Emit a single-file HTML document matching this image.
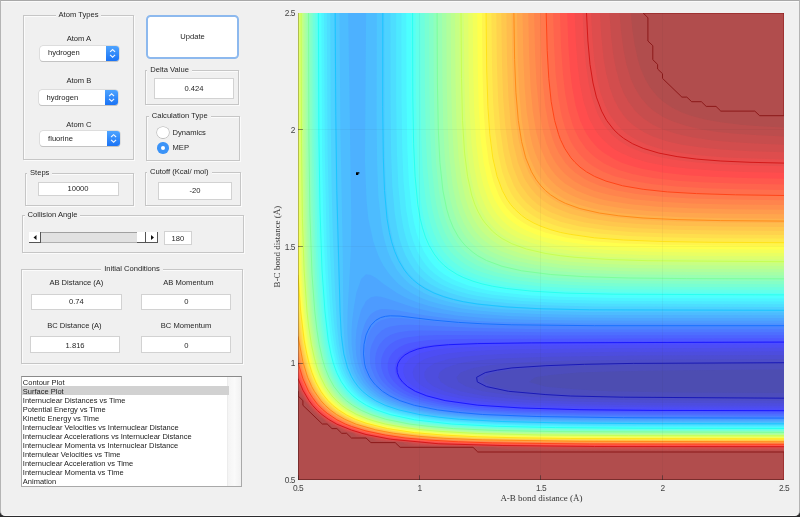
<!DOCTYPE html><html><head><meta charset="utf-8"><style>
html,body{margin:0;padding:0;width:800px;height:517px;overflow:hidden;background:#2b2b2d}
body{position:relative;font-family:"Liberation Sans",sans-serif;}
#win{position:absolute;left:0;top:0;width:798px;height:515px;background:#f0f0f0;border:1px solid #b4b4b4;border-top-color:#a8a8a8;border-bottom:none;border-radius:0 0 5px 5px;overflow:hidden;box-shadow:inset 0 1px 0 #fafafa, inset 0 -1px 0 #f8f8f8}
.pn{position:absolute;box-sizing:border-box;border:1px solid #c6c6c6;box-shadow:1px 1px 0 #fbfbfb, inset 1px 1px 0 #fbfbfb}
.pt{position:absolute;height:12px;font-size:7.6px;line-height:12px;color:#262626;white-space:nowrap}
.pt span{background:#f0f0f0;padding:0 3px}
.lb{position:absolute;height:10px;font-size:7.6px;line-height:10px;color:#262626;text-align:center;white-space:nowrap}
.ed{position:absolute;box-sizing:border-box;background:#fff;border:1px solid #d2d2d2;font-size:7.6px;color:#262626;text-align:center;white-space:nowrap}
.pp{position:absolute;box-sizing:border-box;background:#fff;border-radius:3px;box-shadow:0 0 0 0.5px #c9c9c9, 0 1px 0.5px #bdbdbd;font-size:7.6px;color:#222;white-space:nowrap;overflow:hidden}
.pb{position:absolute;right:0;top:0;background:linear-gradient(#4ea4ff,#1a73f5)}
.tk{position:absolute;font-size:8.4px;color:#444;letter-spacing:-0.5px;white-space:nowrap;line-height:10px}
.li{position:absolute;left:0px;height:9px;line-height:9px;font-size:7.5px;color:#222;padding-left:0.5px;white-space:nowrap}
</style></head><body><div id="win">
</div>
<div id="ui" style="position:absolute;left:0;top:0;width:800px;height:517px;will-change:transform">
<div class="pn" style="left:23px;top:15px;width:111px;height:145px"></div>
<div class="pt" style="left:23px;width:111px;top:9.4px;text-align:center"><span>Atom Types</span></div>
<div class="lb" style="left:18.900000000000006px;top:33.8px;width:120px">Atom A</div>
<div class="pp" style="left:40px;top:46.2px;width:79px;height:14.799999999999997px"><span style="position:absolute;left:8px;top:0;line-height:14.799999999999997px">hydrogen</span><div class="pb" style="width:13px;height:14.799999999999997px"><svg width="13" height="14.799999999999997" style="position:absolute;left:0;top:0"><path d="M4.1 5.899999999999999 L6.6 3.5999999999999988 L9.1 5.899999999999999 M4.1 8.799999999999999 L6.6 11.099999999999998 L9.1 8.799999999999999" stroke="#fff" stroke-opacity="0.92" stroke-width="1.15" fill="none"/></svg></div></div>
<div class="lb" style="left:18.900000000000006px;top:75.9px;width:120px">Atom B</div>
<div class="pp" style="left:38.6px;top:89.5px;width:79.30000000000001px;height:15.099999999999994px"><span style="position:absolute;left:8px;top:0;line-height:15.099999999999994px">hydrogen</span><div class="pb" style="width:13px;height:15.099999999999994px"><svg width="13" height="15.099999999999994" style="position:absolute;left:0;top:0"><path d="M4.1 6.049999999999997 L6.6 3.7499999999999973 L9.1 6.049999999999997 M4.1 8.949999999999998 L6.6 11.249999999999996 L9.1 8.949999999999998" stroke="#fff" stroke-opacity="0.92" stroke-width="1.15" fill="none"/></svg></div></div>
<div class="lb" style="left:18.900000000000006px;top:120.4px;width:120px">Atom C</div>
<div class="pp" style="left:40.1px;top:131.3px;width:79.6px;height:15.0px"><span style="position:absolute;left:8px;top:0;line-height:15.0px">fluorine</span><div class="pb" style="width:13px;height:15.0px"><svg width="13" height="15.0" style="position:absolute;left:0;top:0"><path d="M4.1 6.0 L6.6 3.7 L9.1 6.0 M4.1 8.9 L6.6 11.2 L9.1 8.9" stroke="#fff" stroke-opacity="0.92" stroke-width="1.15" fill="none"/></svg></div></div>
<div style="position:absolute;left:146px;top:15px;width:93px;height:43.5px;box-sizing:border-box;border:2.2px solid #8db9ee;border-radius:4.5px;background:#fff;font-size:7.6px;color:#262626;text-align:center;line-height:39.5px">Update</div>
<div class="pn" style="left:145px;top:69.5px;width:94px;height:35.5px"></div>
<div class="pt" style="left:147.2px;top:63.9px"><span>Delta Value</span></div>
<div class="ed" style="left:154.3px;top:77.7px;width:79.29999999999998px;height:21.0px;line-height:19.0px;padding-top:0.4px">0.424</div>
<div class="pn" style="left:146px;top:115.5px;width:94px;height:45.0px"></div>
<div class="pt" style="left:148.7px;top:109.9px"><span>Calculation Type</span></div>
<div style="position:absolute;left:157.2px;top:126.6px;width:11.4px;height:11.4px;box-sizing:border-box;border-radius:50%;background:#fff;box-shadow:0 0 0 0.6px #b5b5b5, 0 0.6px 0.6px #aaa"></div>
<div class="lb" style="left:172.5px;top:128.1px;text-align:left">Dynamics</div>
<div style="position:absolute;left:157.3px;top:142.3px;width:11.4px;height:11.4px;box-sizing:border-box;border-radius:50%;background:#3b93f7"><div style="position:absolute;left:3.7px;top:3.7px;width:4px;height:4px;border-radius:50%;background:#fff"></div></div>
<div class="lb" style="left:172.5px;top:143.4px;text-align:left">MEP</div>
<div class="pn" style="left:24.5px;top:173px;width:109.5px;height:32.5px"></div>
<div class="pt" style="left:27px;top:167.4px"><span>Steps</span></div>
<div class="ed" style="left:37.5px;top:181.7px;width:81.0px;height:14.700000000000017px;line-height:12.700000000000017px;padding-top:0.4px">10000</div>
<div class="pn" style="left:145px;top:172px;width:96px;height:34.19999999999999px"></div>
<div class="pt" style="left:147px;top:166.4px"><span>Cutoff (Kcal/ mol)</span></div>
<div class="ed" style="left:158.2px;top:181.7px;width:73.5px;height:18.80000000000001px;line-height:16.80000000000001px;padding-top:0.4px">-20</div>
<div class="pn" style="left:22px;top:215px;width:222px;height:37.5px"></div>
<div class="pt" style="left:24.6px;top:209.4px"><span>Collision Angle</span></div>
<div style="position:absolute;left:29px;top:231.5px;width:128.6px;height:11.2px;box-sizing:border-box;background:#e1e1e1;border-top:1.5px solid #a0a0a0;border-bottom:1px solid #b0b0b0"></div>
<div style="position:absolute;left:29px;top:231.5px;width:11.8px;height:11.2px;box-sizing:border-box;background:#fff;border-right:1.5px solid #555;border-bottom:1.5px solid #555"><svg width="10" height="10" style="position:absolute;left:2px;top:1px"><path d="M2.5 4.5 L5.5 2 L5.5 7 Z" fill="#111"/></svg></div>
<div style="position:absolute;left:137.1px;top:231.5px;width:8.8px;height:11.2px;box-sizing:border-box;background:#fff;border-right:1.2px solid #555;border-bottom:1.5px solid #555"></div>
<div style="position:absolute;left:145.9px;top:231.5px;width:11.7px;height:11.2px;box-sizing:border-box;background:#fff;border-right:1.5px solid #555;border-bottom:1.5px solid #555"><svg width="10" height="10" style="position:absolute;left:2px;top:1px"><path d="M3 2 L6 4.5 L3 7 Z" fill="#111"/></svg></div>
<div class="ed" style="left:164.3px;top:231.4px;width:27.299999999999983px;height:14.099999999999994px;line-height:12.099999999999994px;padding-top:0.4px">180</div>
<div class="pn" style="left:21px;top:268.5px;width:222px;height:95.5px"></div>
<div class="pt" style="left:21px;width:222px;top:262.9px;text-align:center"><span>Initial Conditions</span></div>
<div class="lb" style="left:16.400000000000006px;top:277.8px;width:120px">AB Distance (A)</div>
<div class="ed" style="left:31.2px;top:293.6px;width:90.39999999999999px;height:16.799999999999955px;line-height:14.799999999999955px;padding-top:0.4px">0.74</div>
<div class="lb" style="left:14.400000000000006px;top:321px;width:120px">BC Distance (A)</div>
<div class="ed" style="left:30.2px;top:336.2px;width:89.8px;height:17.30000000000001px;line-height:15.300000000000011px;padding-top:0.4px">1.816</div>
<div class="lb" style="left:128.4px;top:277.8px;width:120px">AB Momentum</div>
<div class="ed" style="left:141.2px;top:293.6px;width:90.30000000000001px;height:16.799999999999955px;line-height:14.799999999999955px;padding-top:0.4px">0</div>
<div class="lb" style="left:126.1px;top:321px;width:120px">BC Momentum</div>
<div class="ed" style="left:141.2px;top:336.2px;width:90.30000000000001px;height:17.30000000000001px;line-height:15.300000000000011px;padding-top:0.4px">0</div>
<div style="position:absolute;left:21.3px;top:376.2px;width:220.4px;height:110.8px;box-sizing:border-box;background:#fff;border:1px solid #a9a9a9;border-top-color:#8a8a8a">
<div style="position:absolute;right:0;top:0;width:12.5px;height:108.8px;background:linear-gradient(90deg,#f4f4f4,#fafafa 50%,#f1f1f1);border-left:1px solid #ececec"></div>
<div style="position:absolute;left:0;top:8.9px;width:207px;height:9px;background:#d1d1d1"></div>
<div class="li" style="top:0.7px">Contour Plot</div>
<div class="li" style="top:9.7px">Surface Plot</div>
<div class="li" style="top:18.7px">Internuclear Distances vs Time</div>
<div class="li" style="top:27.7px">Potential Energy vs Time</div>
<div class="li" style="top:36.7px">Kinetic Energy vs Time</div>
<div class="li" style="top:45.7px">Internuclear Velocities vs Internuclear Distance</div>
<div class="li" style="top:54.7px">Internuclear Accelerations vs Internuclear Distance</div>
<div class="li" style="top:63.7px">Internuclear Momenta vs Internuclear Distance</div>
<div class="li" style="top:72.7px">Internulear Velocities vs Time</div>
<div class="li" style="top:81.7px">Internuclear Acceleration vs Time</div>
<div class="li" style="top:90.7px">Internuclear Momenta vs Time</div>
<div class="li" style="top:99.7px">Animation</div>
</div>
<svg width="800" height="517" style="position:absolute;left:0;top:0">
<defs><clipPath id="pc"><rect x="298" y="13" width="486" height="467"/></clipPath></defs>
<g clip-path="url(#pc)">
<rect x="298" y="13" width="486" height="467" fill="#b14d4d"/>
<path fill="#bc4d4d" fill-rule="evenodd" d="M493 447.3 502.1 448.7 511.8 449.4 545.9 450.3 784 450.9 784 127.5 759.7 126.2 740.3 124.7 720.8 122.3 706.2 119.7 691.7 115.9 681.9 112.4 672.2 107.7 663.3 101.7 657.6 96.7 650.2 87.7 644.8 78.4 640.8 69 637.9 59.7 634.8 45.7 632.6 31.7 630.7 13 298 13 298 388.5 300.4 395.9 302.9 398.3 304 400.6 307.7 404.6 311.2 409.9 316 414.6 317.4 416 322.9 419.3 327.2 422.9 329.2 424 332 426.6 339 428.6 341.7 431.3 352.6 433.3 356.3 436.4 371.3 438 375.8 440.9 380.6 441.6 402.9 442.6 404.9 444.1 409.8 445.5 414.6 446 429.2 446.5 492.4 447.3Z"/>
<path fill="#c74d4d" fill-rule="evenodd" d="M516.1 447.3 541 448.6 584.7 449.3 784 449.8 784 136.4 754.8 135.1 735.4 133.8 716 131.7 701.4 129.4 686.8 126.1 672.2 121.3 662.5 116.7 653.8 111.1 647.9 106 640.3 97.1 634.7 87.7 630.6 78.4 626.4 64.4 623.6 50.4 621.1 31.7 619.6 13 298 13 298 386 300 391.3 305.2 400.6 312.6 409.3 318.1 414.6 327.2 421.9 346.6 431.5 351.5 432.3 354.5 433.3 356.3 434.8 361.2 436.2 373.9 438 375.8 439.2 380.6 440.5 407.4 442.6 414.6 444.6 419.5 445.2 438.9 446 511.8 447.2Z"/>
<path fill="#d24d4d" fill-rule="evenodd" d="M553.6 447.3 628.5 448.4 784 448.7 784 144.7 754.8 143.6 730.5 142.1 711.1 140.2 691.7 137.3 677.1 134.1 663.7 129.8 652.8 124.7 643.1 118.3 635.3 111.1 628.5 102 623.3 92.4 619.7 83 615.9 69 613.3 55 611.1 36.3 609.4 13 298 13 298 384 301 391.3 306.3 400.6 312.6 408.2 319.2 414.6 327.2 420.9 336.9 426.2 346.6 430.6 351.5 431.7 361.2 435.3 376.6 438 380.6 439.5 385.5 440.3 412.2 442.6 419.5 444.1 434.1 445.2 550.7 447.3Z"/>
<path fill="#de4d4d" fill-rule="evenodd" d="M655.9 447.3 784 447.6 784 152.3 750 151.3 720.8 149.5 701.4 147.6 681.9 144.7 667.4 141.4 652.8 136.5 643.1 131.8 633.3 125.3 628 120.4 623.8 115.7 618.8 108.5 613.9 99.2 609.7 87.7 606.2 73.7 603.7 59.7 601.3 36.3 599.9 13 298 13 298 382 301.9 391.3 307.5 400.6 311.1 405.3 317.4 412.1 327.2 419.9 336.9 425.4 346.6 429.8 361.2 434.4 385.5 439.5 429.2 444.2 448.7 445.1 536.1 446.7 652.8 447.3Z"/>
<path fill="#e94d4d" fill-rule="evenodd" d="M423.3 442.6 434.1 443.8 448.7 444.5 531.3 446.2 618.8 446.8 784 447 784 159.5 725.7 157.5 701.4 155.6 681.4 153.1 662.5 149.4 647.9 145 638.2 140.8 627.5 134.4 621.8 129.8 617.2 125.1 610.3 115.7 605.4 106.4 600.4 92.4 597.1 78.4 594.2 59.7 592.2 36.3 591 13 298 13 298 379.7 302.9 391.3 307.7 399.4 312.6 405.9 316.3 409.9 322.3 415.3 327.7 419.3 336.9 424.6 346.6 428.9 366 434.8 390.3 439.5 419.5 442.3Z"/>
<path fill="#f44d4d" fill-rule="evenodd" d="M429.7 442.6 458.4 444.3 536.1 445.8 784 446.5 784 166.3 745.1 165.3 716 164 691.7 162 672.2 159.5 657.6 156.8 643.1 152.8 628.5 146.6 618.8 140.6 611.6 134.4 603.8 125.1 599.3 117.4 596.4 111.1 591.7 97.1 588.6 83 585.9 64.4 583.9 41 582.6 13 298 13 298 377.4 303.8 391.3 307.7 398 313 405.3 317.3 409.9 322.5 414.6 329 419.3 337.1 424 347.9 428.6 366 434.2 390.3 438.9 429.2 442.6Z"/>
<path fill="#ff4d4d" fill-rule="evenodd" d="M437 442.6 463.2 444 541 445.4 784 446.1 784 172.7 745.1 171.9 716 170.7 686.8 168.6 667.4 166.3 647.9 162.6 633.3 158.3 621.1 153.1 613.9 148.9 609 145.3 602.3 139.1 598.3 134.4 594.5 128.8 590 120.4 588 115.7 583.5 101.7 579.9 83.8 577.5 64.4 575.8 41 574.7 13 298 13 298 374.9 302.5 386.6 304.8 391.3 307.7 396.6 314.1 405.3 318.4 409.9 323.7 414.6 330.3 419.3 338.7 424 349.7 428.6 356.3 430.8 366 433.6 375.8 435.6 395.2 438.9 434.1 442.5Z"/>
<path fill="#ff584d" fill-rule="evenodd" d="M445.3 442.6 492.4 444.2 550.7 445.1 784 445.7 784 178.7 745.1 178 711.1 176.8 686.8 175.2 662.5 172.6 643.1 169.1 628.5 165.1 621.1 162.4 613.9 159.1 604 153.1 598.3 148.4 594.5 144.6 590 139.1 586.9 134.4 584.3 129.8 580.1 120.4 575.8 106.4 572.2 87.7 570 69 568.4 45.7 567.2 13 298 13 298 372.2 299.7 377.3 303.4 386.6 307.7 395 315.1 405.3 319.6 409.9 327.2 416.2 332 419.5 341.7 424.7 351.5 428.6 361.2 431.6 370.9 434.1 385.5 436.8 409.8 440 443.8 442.6Z"/>
<path fill="#ff634d" fill-rule="evenodd" d="M454.9 442.6 502.1 444 560.4 444.7 784 445.2 784 184.5 735.4 183.6 701.4 182.3 677.1 180.7 652.8 177.9 633.3 174.2 618.8 169.9 611.6 167.1 604.2 163.4 595.6 157.8 590.2 153.1 585.8 148.4 579.2 139.1 575 130.8 572.7 125.1 568.5 111.1 565.3 94.4 562.9 73.7 561 45.7 560 13 298 13 298 369.3 300.6 377.3 304.3 386.6 307.7 393.3 312.4 400.6 316.2 405.3 320.7 409.9 327.2 415.3 333 419.3 341.7 424 353.4 428.6 361.2 431 370.9 433.5 385.5 436.3 396.4 438 414.6 439.9 453.5 442.6Z"/>
<path fill="#ff6e4d" fill-rule="evenodd" d="M466.4 442.6 511.8 443.7 570.2 444.4 784 444.8 784 190 740.3 189.3 706.2 188.3 677.1 186.6 652.8 184.2 633.3 181.1 615.2 176.4 603.2 171.8 594.5 167.1 589.6 163.8 584.7 159.8 579.9 154.8 575 148.6 572 143.8 569.6 139.1 565.7 129.8 561.6 115.7 558.2 97.1 555.6 73.7 554.1 45.7 553.1 13 298 13 298 366.2 302.9 381.2 307.5 391.3 310.3 395.9 317.2 405.3 321.8 409.9 327.4 414.6 334.4 419.3 343.4 424 351.5 427.2 361.2 430.4 372.5 433.3 400.1 437.9 429.2 440.6 463.2 442.5Z"/>
<path fill="#ff794d" fill-rule="evenodd" d="M480.8 442.6 579.9 444 784 444.3 784 195.2 735.4 194.6 696.5 193.3 667.4 191.6 643.1 189 623.6 185.7 607.1 181.1 594.5 175.9 587.1 171.8 580.7 167.1 575.6 162.4 571.5 157.8 565.2 148.4 559 134.4 555 120.4 551.6 101.7 549.1 78.4 547.5 50.4 546.6 13 298 13 298 362.9 300.8 372.6 304.1 381.9 308.5 391.3 312.6 397.9 317.4 404.2 323 409.9 328.7 414.6 336.9 419.9 345.1 424 356.3 428.3 375.8 433.4 404.8 438 438.9 440.8 477.8 442.5Z"/>
<path fill="#ff844d" fill-rule="evenodd" d="M499.6 442.6 594.5 443.6 784 443.9 784 200.3 730.5 199.6 691.7 198.4 662.5 196.7 638.2 194.2 616.5 190.5 599.8 185.8 589.6 181.6 584.7 179.1 575 172.6 570.2 168.3 565.3 162.9 558.8 153.1 555.6 146.6 552.6 139.1 548.6 125.1 545.3 106.4 542.9 83 541.1 50.4 540.2 13 298 13 298 359.2 302.9 376.3 307.1 386.6 312.3 395.9 315.6 400.6 319.5 405.3 327.2 412.4 336.9 419 341.7 421.6 346.8 424 359.5 428.6 380.6 433.8 409.8 438 448.7 440.8 497.3 442.6Z"/>
<path fill="#ff8f4d" fill-rule="evenodd" d="M527 442.6 618.8 443.3 784 443.5 784 205.1 730.5 204.5 691.7 203.5 657.6 201.6 633.3 199.2 609.7 195.1 594.5 190.9 582.2 185.8 575 181.7 570.2 178.3 565.3 174.2 560.4 169.1 555.6 162.7 552.7 157.8 550.3 153.1 546.5 143.8 542.6 129.8 539.2 111.1 536.5 83 535.1 55 534.1 13 298 13 298 355.1 302.9 373.6 306 381.9 310.5 391.3 316.7 400.6 320.7 405.3 325.5 409.9 332 415 338.9 419.3 348.6 424 361.2 428.5 370.9 431 381.1 433.3 395.2 435.6 424.4 438.8 468.1 441.2 526.4 442.6Z"/>
<path fill="#ff9b4d" fill-rule="evenodd" d="M577.2 442.6 784 443 784 209.8 730.5 209.3 691.7 208.3 657.6 206.7 632.6 204.5 609 200.9 599.3 198.7 589.6 195.8 576.4 190.5 565.3 183.7 560.4 179.8 555.6 174.9 550.7 168.7 546.8 162.4 540.7 148.4 536.1 131.8 532.8 111.1 530.6 87.7 529.1 55 528.3 13 298 13 298 350.6 302.1 367.9 307 381.9 311.5 391.3 317.8 400.6 321.8 405.3 326.7 409.9 336.9 417.2 350.4 424 361.2 427.7 370.9 430.4 385.5 433.5 409.8 436.9 429.2 438.6 458.4 440.3 487.5 441.3 575 442.6Z"/>
<path fill="#ffa64d" fill-rule="evenodd" d="M426.9 438 473 440.4 536.1 441.7 623.6 442.4 784 442.6 784 214.3 725.7 213.8 681.9 212.7 647.9 210.9 623.6 208.6 599.3 204.5 582.4 199.8 570.2 194.7 562.8 190.5 556.5 185.8 551.5 181.1 547.4 176.4 541 166.7 535.1 153.1 532.2 143.8 530.1 134.4 526.6 111.1 524.7 87.7 523.3 55 522.5 13 298 13 298 345.6 303 367.9 307.9 381.9 312.5 391.3 317.4 398.6 323.1 405.3 328.1 409.9 334.3 414.6 341.7 419.1 356.3 425.4 366.4 428.6 375.8 430.9 395.2 434.4 424.4 437.8Z"/>
<path fill="#ffb14d" fill-rule="evenodd" d="M434 438 477.8 440 541 441.3 784 442 784 218.7 725.7 218.2 681.9 217.2 647.9 215.6 618.8 213 595 209.1 577.8 204.5 565.3 199.4 557.8 195.1 551.4 190.5 546.3 185.8 542.2 181.1 535.9 171.8 529.7 157.8 526.8 148.4 524.7 139.1 521.6 119.5 519.2 92.4 517.8 59.7 517 13 298 13 298 340 300.6 353.9 304 367.9 309 381.9 312.6 389.3 317.4 397.1 324.3 405.3 329.4 409.9 335.7 414.6 341.7 418.2 356.3 424.7 369 428.6 375.8 430.2 395.2 433.9 429.2 437.6Z"/>
<path fill="#ffbc4d" fill-rule="evenodd" d="M442.2 438 487.5 439.8 545.9 440.8 784 441.5 784 222.9 720.8 222.4 677.1 221.4 643.1 219.9 613.9 217.3 591.9 213.8 573.7 209.1 560.4 203.8 553.2 199.8 546.5 195.1 541.3 190.5 536.1 184.5 531.3 177.3 528.3 171.8 522.9 157.8 518.5 139.1 515.8 120.4 513.6 92.4 512.3 59.7 511.6 13 298 13 298 333.6 302.5 358.6 306.5 372.6 312.6 387.4 317.4 395.5 321.3 400.6 325.6 405.3 330.8 409.9 337.2 414.6 345.5 419.3 356.3 424 366 427.1 385.5 431.6 409.8 435.1 438.9 437.8Z"/>
<path fill="#ffc74d" fill-rule="evenodd" d="M451.6 438 497.3 439.5 555.6 440.4 784 441 784 227 720.8 226.5 677.1 225.7 643.1 224.3 613.9 221.9 589.6 218.5 570.2 213.8 555.6 208.1 548.9 204.5 542 199.8 536.7 195.1 531.3 189.1 526.4 182 523.4 176.5 517.9 162.4 513.4 143.8 510.7 125.1 508.4 97.1 507 59.7 506.4 13 298 13 298 326.2 302.5 353.9 307.7 373.4 313.3 386.6 317.4 393.7 322.5 400.6 326.9 405.3 332.2 409.9 338.9 414.6 347.3 419.3 358.5 424 366 426.3 375.8 429 390.3 431.8 414.6 435.1 448.7 437.8Z"/>
<path fill="#ffd24d" fill-rule="evenodd" d="M462.8 438 507 439.3 565.3 440 784 440.5 784 231 720.8 230.6 672.2 229.7 638.2 228.3 609 226 584.7 222.5 565.3 217.8 550.7 212.2 544.9 209.1 537.8 204.5 532.3 199.8 527.9 195.1 521.6 186.4 518.6 181.1 513 167.1 508.4 148.4 505.2 125.1 503.1 97.1 502 64.4 501.3 13 298 13 298 317.5 300.2 335.2 302.9 351.1 307 367.9 310.2 377.3 312.6 382.9 317.4 391.9 322.3 398.7 327.2 404.2 333.7 409.9 340.5 414.6 351.5 420.3 360.7 424 370.9 427 380.6 429.3 395.2 432 424.4 435.5 458.4 437.8Z"/>
<path fill="#ffde4d" fill-rule="evenodd" d="M476.6 438 521.6 439 575 439.6 784 440 784 234.9 716 234.4 667.4 233.5 633.3 232.2 604.2 229.8 579.9 226.4 560.4 221.7 545.9 216.1 536.1 210.7 531.3 207.1 526.4 202.8 521.6 197.4 516.7 190.6 514 185.8 508.2 171.8 505.6 162.4 503.6 153.1 500.3 129.8 498.2 101.7 496.9 64.4 496.3 13 298 13 298 307 300.6 330.6 303.5 349.2 307.7 366.8 312.6 380.4 317.4 390 321.4 395.9 329.7 405.3 335.2 409.9 342.1 414.6 351 419.3 361.2 423.3 380.6 428.7 408.6 433.3 438.9 436 473 437.8Z"/>
<path fill="#ffe94d" fill-rule="evenodd" d="M494.7 438 589.6 439.1 784 439.5 784 238.6 711.1 238.2 662.5 237.3 628.5 235.9 599.3 233.6 575 230.2 565.3 228.2 555.6 225.5 545.9 222.1 538 218.5 531.3 214.5 526.4 211 521.6 206.6 515.5 199.8 511.8 194.4 507.3 185.8 502.2 171.8 498 153.1 495 129.8 493.1 101.7 492 64.4 491.4 13 298 13 298 294 300 316.5 302.9 339.9 306.6 358.6 310.7 372.6 312.6 377.7 316.7 386.6 322.3 395.5 327.2 401.4 336.7 409.9 346.6 416.1 353.1 419.3 361.2 422.4 375.8 426.8 390.3 429.9 409.8 432.8 429.2 434.7 458.4 436.6 492.4 437.9Z"/>
<path fill="#fff44d" fill-rule="evenodd" d="M520.5 438 613.9 438.7 784 439 784 242.3 711.1 242 662.5 241.1 623.6 239.6 594.5 237.3 570.2 233.9 550.7 229.2 541 225.8 535.1 223.1 526.9 218.5 521.6 214.6 515.5 209.1 511.5 204.5 507 198 502.9 190.5 497.7 176.4 493.4 157.8 490.3 134.4 488.4 106.4 487.2 69 486.6 13 298 13 298 277 299 293.2 301.5 321.2 304 339.9 307.7 358.6 311.8 372.6 317.4 385.7 322.3 393.7 327.8 400.6 332.5 405.3 338.3 409.9 346.6 415.1 355.1 419.3 361.2 421.6 375.8 426 395.2 430 419.5 433.3 443.8 435.2 477.8 436.8 516.7 437.9Z"/>
<path fill="#ffff4d" fill-rule="evenodd" d="M565.6 438 784 438.5 784 245.9 711.1 245.6 657.6 244.7 618.8 243.2 589.6 240.9 565.3 237.5 545.9 232.8 531.3 227.2 523.8 223.1 517.1 218.5 511.8 213.8 507 208.4 502.1 201.4 498.7 195.1 493.3 181.1 488.8 162.4 485.7 139.1 483.7 111.1 482.5 73.7 481.9 13 298 13 298 252.6 299.5 283.9 301.6 311.9 303.7 330.6 306.8 349.2 310.1 363.2 314.8 377.3 319.2 386.6 325.3 395.9 329.2 400.6 334.1 405.3 341.7 411.1 347.5 414.6 356.3 418.9 366 422.5 375.8 425.3 390.6 428.6 409.8 431.5 429.2 433.6 458.4 435.4 487.5 436.6 565.3 438Z"/>
<path fill="#f4ff58" fill-rule="evenodd" d="M433.3 433.3 477.8 435.7 541 437.1 628.5 437.7 784 438 784 249.5 711.1 249.1 657.6 248.4 618.8 247 589.6 244.9 565.3 241.8 544 237.2 536.1 234.6 526.4 230.6 521.1 227.8 514 223.1 508.4 218.5 503.9 213.8 500.3 209.1 494.6 199.8 490.6 190.5 487.6 181.1 483.6 162.4 480.7 139.1 478.7 106.4 477.8 69 477.3 13 298 13 298 210.3 299.4 260.5 301.2 293.2 303.7 321.2 307.7 348.4 312.5 367.9 318 381.9 322.3 389.7 326.6 395.9 330.7 400.6 335.6 405.3 341.6 409.9 349.4 414.6 361.2 419.9 373.5 424 380.6 425.7 400.1 429.5 429.2 432.9Z"/>
<path fill="#e9ff63" fill-rule="evenodd" d="M441.6 433.3 487.5 435.4 545.9 436.6 784 437.4 784 252.9 701.4 252.5 647.9 251.7 609 250.1 579.9 247.8 555.6 244.4 545.9 242.3 536.1 239.6 526.4 236.1 518.7 232.5 511.8 228.4 507 224.7 502.1 220.3 496.5 213.8 492.4 207.5 488.4 199.8 483.4 185.8 479.2 167.1 476.3 143.8 474.2 111.1 473.2 69 472.7 13 298 13 298.7 176.4 299.5 227.8 300.8 265.2 302.9 301.1 305.4 325.9 309.1 349.2 313.8 367.9 319.3 381.9 322.3 387.6 328.1 395.9 332.1 400.6 337.2 405.3 343.4 409.9 351.3 414.6 366 420.7 376.4 424 385.5 426.1 404.9 429.5 438.9 433.1Z"/>
<path fill="#deff6e" fill-rule="evenodd" d="M451.3 433.3 497.3 435.1 555.6 436.1 784 436.8 784 256.3 701.4 256 647.9 255.2 609 253.8 575 251.2 550.7 247.7 531.3 242.9 516.6 237.2 508.4 232.5 502.1 227.9 497 223.1 492.4 217.7 487.5 210.4 484.5 204.5 480.7 195.1 477.9 185.8 474.2 167.1 471.5 143.8 469.6 111.1 468.6 69 468.2 13 299.2 13 299.9 185.8 300.9 237.2 302.3 274.5 304.6 307.2 307.7 334.6 312.4 358.6 316.6 372.6 323.1 386.6 327.2 392.9 332 398.8 338.9 405.3 345.3 409.9 356.3 415.9 364.3 419.3 375.8 422.9 395.2 427.2 419.5 430.6 448.7 433.1Z"/>
<path fill="#d2ff79" fill-rule="evenodd" d="M462.9 433.3 507 434.7 565.3 435.6 784 436.2 784 259.6 701.4 259.3 647.9 258.6 604.2 257.1 575 255 547 251.2 527.6 246.5 516.7 242.6 511.8 240.3 506 237.2 499.2 232.5 493.9 227.8 489.6 223.1 486.1 218.5 480.6 209.1 476.7 199.8 473.8 190.5 469.9 171.8 467.1 148.4 465.2 115.7 464.2 73.7 463.8 13 300.4 13 301 176.4 301.8 227.8 303 265.2 305.1 297.9 307.8 325.9 312.5 353.9 317.9 372.6 321.9 381.9 324.5 386.6 327.4 391.3 332 397.1 335.3 400.6 341.7 406.2 347.1 409.9 356.3 415 366.8 419.3 375.8 422 382.8 424 395.2 426.5 419.5 430 458.4 433.1Z"/>
<path fill="#c7ff84" fill-rule="evenodd" d="M477.3 433.3 521.6 434.4 575 435.1 784 435.6 784 262.9 647.9 261.9 604.2 260.6 575 258.6 550.7 255.8 528 251.2 511.8 245.7 504 241.8 496.6 237.2 490.9 232.5 486.3 227.8 482.6 223.1 476.9 213.8 472.8 204.5 469.8 195.1 465.7 176.4 462.8 153.1 460.9 120.4 459.8 78.4 459.4 13 301.5 13 302 162.4 303.4 241.8 305.1 279.2 307.1 307.2 309.7 330.6 312.6 348.3 317.4 367.5 321.1 377.3 325.9 386.6 332.5 395.9 336.9 400.6 342.3 405.3 351.5 411.3 357.8 414.6 366 418 380.6 422.5 395.2 425.7 414.6 428.7 443.8 431.4 473 433.1Z"/>
<path fill="#bcff8f" fill-rule="evenodd" d="M496.3 433.3 594.5 434.6 784 435 784 266.1 643.1 265.1 604.2 264 570.2 261.8 555.6 260.3 541 258.2 521.6 253.8 507 248.7 497.3 243.7 492.4 240.5 487.5 236.6 482.7 231.9 477.8 225.8 473 217.9 468.9 209.1 465.8 199.8 461.6 181.1 458.6 157.8 456.5 125.1 455.5 83 455 13 302.7 13 303 129.8 303.8 204.5 305.4 260.5 307.9 302.5 309.8 321.2 312.6 341.2 316.3 358.6 319 367.9 322.3 376.8 324.8 381.9 330.5 391.3 336.9 398.8 344.2 405.3 351.5 410.2 360.1 414.6 366 417 380.6 421.6 395.2 424.9 414.6 428 434.1 430 463.2 432 492.4 433.2Z"/>
<path fill="#b1ff9b" fill-rule="evenodd" d="M524.1 433.3 613.9 434.1 784 434.4 784 269.2 696.5 269 638.2 268.3 599.3 267.1 565.3 264.9 536.1 261.2 516.7 256.9 501.1 251.2 492.4 246.6 485.6 241.8 480.3 237.2 476.1 232.5 472.6 227.8 467.3 218.5 463.4 209.1 460.5 199.8 456.7 181.1 454 157.8 452.1 125.1 451.1 83 450.7 13 304.1 13 304.5 153.1 305.9 237.2 307.1 269.9 308.6 293.2 311.2 321.2 313.8 339.9 317.4 358 320.4 367.9 324 377.3 328.9 386.6 335.8 395.9 341.7 401.8 351.5 408.9 362.6 414.6 375.3 419.3 390.3 423.1 404.9 425.8 424.4 428.4 468.1 431.5 521.6 433.2Z"/>
<path fill="#a6ffa6" fill-rule="evenodd" d="M575.8 433.3 784 433.8 784 272.3 691.7 272.1 633.3 271.4 589.6 270 560.4 268 536.1 265.1 514.2 260.5 507 258.3 497.3 254.5 490.5 251.2 482.7 246.1 477.6 241.8 473 237.1 468.1 230.7 463.7 223.1 459.6 213.8 456.6 204.5 452.6 185.8 449.4 157.8 447.6 125.1 446.7 83 446.3 13 305.4 13 306 167.1 306.8 218.5 307.9 255.8 310 293.2 312.6 321.7 316 344.6 320.4 363.2 323.5 372.6 327.7 381.9 333.7 391.3 341.7 400.2 348 405.3 356.3 410.4 365.1 414.6 378.5 419.3 395.2 423.3 404.9 425 424.4 427.6 443.8 429.4 497.3 431.9 575 433.3Z"/>
<path fill="#9bffb1" fill-rule="evenodd" d="M442.6 428.6 487.5 430.9 550.7 432.3 633.3 432.9 784 433.2 784 275.4 633.3 274.5 589.6 273.2 555.6 271 541 269.5 526.4 267.3 507 262.8 497.3 259.5 489.1 255.8 482.7 252.2 477.8 248.8 470.1 241.8 466.1 237.2 462.9 232.5 458.4 224.3 455.8 218.5 452.7 209.1 450.3 199.8 447.8 185.8 444.8 157.8 443.2 125.1 442.4 83 442 13 306.8 13 307.5 176.4 308.3 223.1 309.6 260.5 311.8 297.9 314.1 321.2 317.4 344.7 322.3 364.9 327.2 377.7 332 386.6 335.3 391.3 339.3 395.9 344.1 400.6 350.1 405.3 357.7 409.9 370.9 415.7 381.8 419.3 390.3 421.3 409.8 425 438.9 428.3Z"/>
<path fill="#8fffbc" fill-rule="evenodd" d="M452.8 428.6 497.3 430.6 555.6 431.7 784 432.5 784 278.4 633.3 277.6 589.6 276.4 555.6 274.4 526.4 271 511.8 268.2 502.1 265.7 487.5 260.2 479.3 255.8 473 251.5 467.3 246.5 463.1 241.8 458.4 235.3 454.2 227.8 450.4 218.5 447.5 209.1 443.7 190.5 440.6 162.4 438.9 129.8 438 83 437.7 13 308.2 13 308.7 148.4 310 227.8 312.6 288.5 314.6 311.9 317.4 335.2 319.9 349.2 323.4 363.2 327.2 374 330.9 381.9 333.7 386.6 337 391.3 341.1 395.9 346.6 401.1 352.2 405.3 360.1 409.9 370.9 414.7 385.3 419.3 404.9 423.4 424.4 426 448.7 428.3Z"/>
<path fill="#84ffc7" fill-rule="evenodd" d="M465.3 428.6 507 430.1 565.3 431.1 784 431.8 784 281.3 628.5 280.6 584.7 279.4 550.7 277.4 525.2 274.5 511.8 272.2 502.1 269.9 492.4 266.9 482.7 263 477.8 260.5 470.4 255.8 464.7 251.2 460.1 246.5 456.4 241.8 450.7 232.5 446.6 223.1 443.6 213.8 441.3 204.5 438.9 191 436 162.4 434.5 129.8 433.7 83 433.4 13 309.9 13 310.2 125.1 310.9 195.1 312.3 251.2 314.3 288.5 317.7 325.9 320.6 344.6 323.7 358.6 327.2 369.9 332 380.8 336.9 388.6 343 395.9 351.5 403.1 362.7 409.9 373.6 414.6 389.2 419.3 404.9 422.5 419.5 424.7 438.9 426.7 463.2 428.5Z"/>
<path fill="#79ffd2" fill-rule="evenodd" d="M480.9 428.6 521.6 429.8 579.9 430.5 784 431.1 784 284.3 623.6 283.5 579.9 282.3 545.9 280.3 516.7 276.8 497.3 272.7 487.5 269.8 477.8 265.8 468.4 260.5 463.2 256.7 457.2 251.2 453.2 246.5 448.7 239.8 444.8 232.5 441.1 223.1 438.9 215.9 436.3 204.5 434.7 195.1 431.8 167.1 430.2 134.4 429.4 87.7 429.1 13 311.5 13 311.9 139.1 312.8 213.8 315.1 274.5 317 302.5 318.9 321.2 321.4 339.9 324.2 353.9 327.2 365.1 331.9 377.3 336.9 386 341.7 392.4 350.2 400.6 356.3 405 365.3 409.9 376.8 414.6 390.3 418.5 400.1 420.7 414.6 423.2 429.2 425 453.5 427.1 477.8 428.5Z"/>
<path fill="#6effde" fill-rule="evenodd" d="M502.1 428.6 599.3 430 784 430.4 784 287.2 681.9 287 618.8 286.4 575 285.2 541 283.2 511.8 279.7 492.4 275.6 482.7 272.5 475.9 269.9 466.7 265.2 459.9 260.5 454.5 255.8 450.2 251.2 446.6 246.5 441.2 237.2 437.3 227.8 434.4 218.5 432.2 209.1 429.9 195.1 427.2 167.1 425.7 134.4 424.9 87.7 424.7 13 313.1 13 313.7 153.1 315.3 237.2 316.9 274.5 318.4 297.9 321.2 325.9 324 344.6 327 358.6 329.9 367.9 333.7 377.3 339.2 386.6 346.6 395.5 352.4 400.6 359.2 405.3 368.1 409.9 380.1 414.6 390.3 417.5 400.1 419.8 419.5 423 453.5 426.3 502.1 428.6Z"/>
<path fill="#63ffe9" fill-rule="evenodd" d="M535.1 428.6 623.6 429.4 784 429.7 784 290.1 618.8 289.4 575 288.3 541 286.5 511.8 283.3 490.6 279.2 482.7 277 473 273.4 465.3 269.9 457.7 265.2 451.8 260.5 447.2 255.8 443.3 251.2 437.5 241.8 433.4 232.5 430.3 223.1 428.1 213.8 425.6 199.8 422.8 171.8 421.3 139.1 420.5 92.4 420.2 13 315.1 13 315.7 157.8 317.4 246.8 319.7 288.5 322.3 320.2 325.8 344.6 328.8 358.6 331.6 367.9 335.6 377.3 341.1 386.6 346.6 393.3 354.7 400.6 361.8 405.3 371 409.9 380.6 413.6 390.3 416.4 402.5 419.3 434.9 424 477.8 426.9 531.3 428.6Z"/>
<path fill="#58fff4" fill-rule="evenodd" d="M608.4 428.6 784 429 784 292.9 613.9 292.3 565.3 291 531.3 288.9 502.1 285.4 482.7 281.2 473 278.1 464.3 274.5 455.8 269.9 449.3 265.2 444.2 260.5 440.1 255.8 436.7 251.2 431.5 241.8 427.7 232.5 425 223.1 422.9 213.8 420.6 199.8 418 171.8 416.7 139.1 415.9 92.4 415.7 13 317 13 317.9 181.1 319.1 232.5 321.1 279.2 323.5 311.9 327.2 341.9 332 363.2 336.9 376 341.7 384.6 346.8 391.3 351.4 395.9 356.3 400 364.5 405.3 374.2 409.9 385.5 414 407.7 419.3 424.4 421.8 443.8 423.9 477.8 426.1 531.3 427.7 604.2 428.6Z"/>
<path fill="#4dffff" fill-rule="evenodd" d="M455.1 424 502.1 426.2 560.4 427.4 784 428.2 784 295.8 613.9 295.2 565.3 294 531.3 292.2 502.1 289 487.5 286.4 477.8 284 463.2 279 454.1 274.5 446.9 269.9 441.3 265.2 436.9 260.5 433.2 255.8 427.7 246.5 423.7 237.2 420.7 227.8 418.5 218.5 416.2 204.5 413.5 176.4 412 143.8 411.3 97.1 411.1 13 319.1 13 319.7 139.1 320.9 218.5 323 274.5 327 325.9 328.9 339.9 331.5 353.9 334 363.2 337.3 372.6 341.7 381.3 345.2 386.6 349.1 391.3 356.3 398 361.2 401.6 370.9 407 377.5 409.9 391.6 414.6 414.6 419.5 434.1 422 453.5 423.8Z"/>
<path fill="#4df4ff" fill-rule="evenodd" d="M468.5 424 511.8 425.6 570.2 426.7 784 427.4 784 298.6 613.9 298.1 565.3 297 531.3 295.4 502.1 292.5 487.5 290.2 477.8 288.1 468.1 285.4 458.4 281.8 452.6 279.2 443.8 273.9 438.5 269.9 433.6 265.2 429.2 259.8 423.7 251.2 419.5 241.8 416.4 232.5 414.1 223.1 411.6 209.1 408.8 181.1 407.3 148.4 406.5 97.1 406.3 13 321.4 13 322 148.4 323.4 223.1 324.8 260.5 326.8 297.9 328.8 321.2 331 339.9 332.6 349.2 336 363.2 341.6 377.3 346.6 385.4 351.3 391.3 356.2 395.9 362.4 400.6 370.3 405.3 380.6 409.8 400.1 415.5 424.4 419.9 443.8 422 468.1 423.9Z"/>
<path fill="#4de9ff" fill-rule="evenodd" d="M485.9 424 526.4 425.2 584.7 426 784 426.5 784 301.4 604.2 300.8 555.6 299.7 521.6 297.8 492.4 294.7 477.8 292.1 468.1 289.7 458.4 286.6 451.5 283.9 442.5 279.2 435.7 274.5 430.4 269.9 426.1 265.2 422.6 260.5 417.2 251.2 413.4 241.8 410.5 232.5 408.4 223.1 406.1 209.1 403.5 181.1 402.2 148.4 401.5 97.1 401.4 13 324 13 324.8 153.1 326.6 241.8 328 274.5 330.4 311.9 332.1 330.6 334.9 349.2 336.9 358.6 339.8 367.9 341.7 372.9 346.6 382.1 351.5 388.6 358.8 395.9 365.2 400.6 373.5 405.3 384.7 409.9 390.3 411.7 400.9 414.6 414.6 417.3 427.1 419.3 443.8 421.1 482.7 423.8Z"/>
<path fill="#4ddeff" fill-rule="evenodd" d="M510.5 424 604.2 425.3 784 425.7 784 304.2 604.2 303.7 555.6 302.7 521.6 301 492.4 298.2 477.8 295.9 468.1 293.9 458.4 291.2 448.7 287.7 440.5 283.9 433 279.2 427.1 274.5 422.4 269.9 418.6 265.2 412.8 255.8 408.7 246.5 405.7 237.2 403.4 227.8 401 213.8 398.3 185.8 396.9 153.1 396.2 101.7 396.2 13 326.8 13 327.6 153.1 329.8 246.5 332 296.4 333.8 321.2 336.4 344.6 339.2 358.6 342 367.9 346.1 377.3 351.5 385.6 356.3 391.3 361.5 395.9 368.2 400.6 376.9 405.3 385.5 408.7 395.2 411.8 406.1 414.6 435.4 419.3 468.1 422 507 423.8Z"/>
<path fill="#4dd2ff" fill-rule="evenodd" d="M552.1 424 638.2 424.6 784 424.9 784 306.9 594.5 306.4 545.9 305.3 511.8 303.5 482.7 300.4 468.1 297.9 458.4 295.6 448.7 292.6 438.9 288.6 430.2 283.9 424.4 279.7 418.5 274.5 414.4 269.9 409.8 263.3 405.7 255.8 401.9 246.5 399.1 237.2 397 227.8 394.8 213.8 392.3 185.8 391.1 153.1 390.6 101.7 390.5 13 330.3 13 330.7 115.7 331.6 185.8 332.6 227.8 335.1 293.2 336.9 325.4 339 344.6 341.6 358.6 346.3 372.6 351.3 381.9 354.8 386.6 359.1 391.3 364.5 395.9 371.3 400.6 380.5 405.3 393.1 409.9 400.1 411.8 412 414.6 424.4 416.7 453.5 420 497.3 422.5 550.7 423.9Z"/>
<path fill="#4dc7ff" fill-rule="evenodd" d="M702.5 424 784 424 784 309.7 647.9 309.6 579.9 309.1 531.3 307.8 492.4 305.1 477.8 303.3 463.2 300.9 448.7 297.3 437 293.2 427.4 288.5 420.1 283.9 414.4 279.2 409.8 274.5 406 269.9 402.9 265.2 398.1 255.8 393.2 241.8 389.3 223.1 387 204.5 385.4 176.4 384.5 143.8 384.2 13 334.3 13 334.8 111.1 335.8 185.8 336.9 234.6 340.1 325.9 341.7 344.9 343.3 353.9 345.5 363.2 347 367.9 351.2 377.3 356.3 385 361.9 391.3 367.5 395.9 374.7 400.6 385.5 405.7 397.9 409.9 414.6 413.9 443.8 418 477.8 420.6 531.3 422.6 599.3 423.5 701.4 424Z"/>
<path fill="#4dbcff" fill-rule="evenodd" d="M471.1 419.3 511.8 421.1 570.2 422.2 784 423.1 784 312.5 589.6 312.1 541 311.1 502.1 309.3 473 306.3 458.4 303.9 448.7 301.8 438.9 299 429.2 295.4 424.4 293.2 414.6 287.5 409.8 283.9 404.9 279.4 400.5 274.5 397 269.9 391.6 260.5 387.7 251.2 384.9 241.8 382.7 232.5 381.2 223.1 378.3 195.1 377.1 162.4 376.6 115.7 376.8 13 339.5 13 340.4 129.8 342.8 255.8 343.3 321.2 344.8 344.6 347 358.6 351.6 372.6 356.8 381.9 360.4 386.6 365 391.3 370.7 395.9 378.4 400.6 388.6 405.3 395.2 407.5 403.1 409.9 414.6 412.5 434.1 415.7 468.1 419.1Z"/>
<path fill="#4db1ff" fill-rule="evenodd" d="M490.2 419.3 531.3 420.6 589.6 421.5 784 422.1 784 315.3 584.7 314.9 536.1 314 497.3 312.2 477.8 310.5 463.2 308.7 448.7 306.1 438.9 303.8 429.2 300.9 421.3 297.9 411.8 293.2 404.4 288.5 398.5 283.9 389.7 274.5 383.2 265.2 380.8 260.5 378.5 255.8 373.4 241.8 368.3 218.5 366.5 199.8 365 162.4 366.1 13 348.2 13 351.3 218.5 350.8 251.2 347.6 311.9 347.3 330.6 348.5 349.2 351.2 363.2 354.5 372.6 356.8 377.3 359.8 381.9 363.5 386.6 368.2 391.3 374.3 395.9 382.2 400.6 390.3 404.2 408.8 409.9 434.1 414.6 458.4 417.1 487.5 419.1Z"/>
<path fill="#4da6ff" fill-rule="evenodd" d="M518.4 419.3 609 420.6 784 421.1 784 318 633.3 318 560.4 317.5 511.8 316.2 473 313.6 458.4 311.9 443.8 309.5 429.2 306.1 417.6 302.5 406.3 297.9 397.5 293.2 383.6 283.9 375.8 277.8 370.9 274.9 366 274.3 361.2 278.8 356.3 293.1 353.9 307.2 352.1 321.2 351.5 331.6 351.6 344.6 353.3 358.6 355.8 367.9 357.6 372.6 363 381.9 366.7 386.6 370.9 390.6 378 395.9 386.4 400.6 398 405.3 415.1 409.9 434.1 413.2 453.5 415.6 482.7 417.7 516.7 419.2Z"/>
<path fill="#4d9bff" fill-rule="evenodd" d="M571.7 419.3 784 420.1 784 320.8 575 320.6 526.4 319.8 487.5 318.2 458.4 315.7 432.6 311.9 413 307.2 385.5 298 380.6 296.7 375.8 296.2 370.9 297.3 366 301.1 361.2 310 358.1 321.2 356.4 330.6 355.7 339.9 355.8 349.2 356.3 355.4 357.8 363.2 360.9 372.6 363.3 377.3 366.3 381.9 370.2 386.6 375.3 391.3 382 395.9 390.9 400.6 404.9 405.7 422.4 409.9 443.8 413.2 463.2 415.2 492.4 417 526.4 418.3 570.2 419.3Z"/>
<path fill="#4d8fff" fill-rule="evenodd" d="M471 414.6 511.8 416.7 570.2 418.1 647.9 418.7 784 419 784 323.6 584.7 323.5 536.1 323 502.1 322.2 473 320.7 448.7 318.6 424.4 315.3 395.2 309.9 385.5 308.9 380.6 309.3 375.8 310.8 370.9 314.1 369 316.5 366 320.9 364 325.9 361.2 336.1 360.1 349.2 360.7 358.6 361.5 363.2 364.5 372.6 366.9 377.3 370 381.9 374 386.6 379.3 391.3 386.3 395.9 395.9 400.6 404.9 403.8 414.6 406.6 430.6 409.9 448.7 412.4 468.1 414.4Z"/>
<path fill="#4d84ff" fill-rule="evenodd" d="M491.1 414.6 536.1 416.2 589.6 417.1 784 417.8 784 326.5 599.3 326.5 521.6 325.8 487.5 324.9 463.2 323.7 438.9 321.8 400.1 318 390.3 318.1 385.5 318.9 380.6 320.5 375.8 323.6 370.9 329.3 368.1 335.2 366.5 339.9 364.9 349.2 365 358.6 366.7 367.9 370.7 377.3 373.9 381.9 378.1 386.6 383.7 391.3 391.1 395.9 401.3 400.6 416.3 405.3 429.2 408 443.8 410.4 463.2 412.5 487.5 414.4Z"/>
<path fill="#4d79ff" fill-rule="evenodd" d="M521.3 414.6 613.9 416.1 784 416.6 784 329.3 604.2 329.4 526.4 329 473 327.8 409.8 324.8 400.1 325 390.3 326.6 385.5 328.3 381.7 330.6 375.8 336.5 371.8 344.6 370.5 349.2 369.9 353.9 370.1 363.2 371.1 367.9 375 377.3 378.3 381.9 382.6 386.6 388.4 391.3 396.3 395.9 407.4 400.6 423.9 405.3 434.1 407.2 451.9 409.9 468.1 411.5 516.7 414.4Z"/>
<path fill="#4d6eff" fill-rule="evenodd" d="M582.6 414.6 784 415.4 784 332.2 541 332.3 419.5 330.4 409.8 330.7 400.1 332 395.2 333.2 390.3 335 385.5 338 383.4 339.9 379.6 344.6 377.2 349.2 375.8 353.9 375.2 358.6 375.2 363.2 375.9 367.9 377.4 372.6 379.7 377.3 383 381.9 387.5 386.6 393.6 391.3 402.1 395.9 414.2 400.6 432.9 405.3 466.4 409.9 516.7 413 579.9 414.6Z"/>
<path fill="#4d63ff" fill-rule="evenodd" d="M485.7 409.9 531.3 412 584.7 413.2 784 414.1 784 335.2 555.6 335.4 438.9 335 419.5 335.7 404.9 337.7 400.1 339.1 395.2 341.1 389.8 344.6 385.4 349.2 382.9 353.9 381.5 358.6 381 363.2 381.4 367.9 382.7 372.6 384.9 377.3 388.2 381.9 392.9 386.6 399.4 391.3 408.6 395.9 422.1 400.6 443.8 405.3 463.2 407.8 482.7 409.7Z"/>
<path fill="#4d58ff" fill-rule="evenodd" d="M514.3 409.9 555.6 411.2 609 412 784 412.6 784 338.2 458.4 339 429.2 340.1 419.5 341.2 409.8 343.1 404.9 344.6 400.1 346.8 395.2 350.1 391.6 353.9 390.3 355.9 389 358.6 387.8 363.2 387.7 367.9 388.6 372.6 390.6 377.3 394 381.9 398.9 386.6 404.9 390.7 414.6 395.4 419.5 397.1 431.1 400.6 443.8 403.2 456.5 405.3 468.1 406.6 511.8 409.8Z"/>
<path fill="#4d4dff" fill-rule="evenodd" d="M569.2 409.9 647.9 410.7 784 411.1 784 341.3 579.9 341.7 477.8 342.6 438.9 344.2 424.4 346 414.6 348.3 409.8 350 404.9 352.5 400.1 356.4 398.1 358.6 395.7 363.2 394.8 367.9 395.3 372.6 397.2 377.3 400.5 381.9 405.7 386.6 413.3 391.3 419.5 393.9 424.4 395.9 441.9 400.6 473.2 405.3 511.8 408 565.3 409.9Z"/>
<path fill="#4d4df4" fill-rule="evenodd" d="M496.6 405.3 541 407.3 594.5 408.5 784 409.5 784 344.4 609 344.9 507 345.8 458.4 347.5 438.9 349.2 429.2 350.9 419.5 353.5 414.6 355.7 409.8 358.6 404.9 364.1 403.4 367.9 403.3 372.6 404.8 377.3 408.1 381.9 413.5 386.6 424.4 392.3 434.5 395.9 443.8 398.2 458.4 401.1 492.4 404.9Z"/>
<path fill="#4d4de9" fill-rule="evenodd" d="M535.3 405.3 623.6 407 784 407.6 784 347.8 613.9 348.3 521.6 349.3 492.4 350.1 468.1 351.3 448.7 353.2 438.9 354.9 429.2 357.4 424.4 359.3 417.7 363.2 413.8 367.9 412.7 372.6 413.7 377.3 417 381.9 422.8 386.6 432 391.3 443.8 395.1 463.2 399.1 472.6 400.6 492.4 402.6 531.3 405.1Z"/>
<path fill="#4d4dde" fill-rule="evenodd" d="M649.6 405.3 784 405.7 784 351.3 604.2 352 511.8 353.5 482.7 355 463.2 356.7 448.7 359 434.4 363.2 427.2 367.9 424.3 372.6 424.5 377.3 427.6 381.9 433.8 386.6 444.4 391.3 462.4 395.9 497.2 400.6 526.4 402.4 579.9 404.3 647.9 405.3Z"/>
<path fill="#4d4dd2" fill-rule="evenodd" d="M539.4 400.6 579.9 401.8 628.5 402.6 784 403.3 784 355 638.2 355.5 550.7 356.7 499.8 358.6 477.8 360.5 463.2 362.6 453.5 365 445.4 367.9 439.4 372.6 438.2 377.3 440.9 381.9 447.7 386.6 460.4 391.3 483.8 395.9 507 398.3 536.1 400.4Z"/>
<path fill="#4d4dc7" fill-rule="evenodd" d="M700.2 400.6 784 400.8 784 359.1 623.6 359.9 575 360.6 536.1 361.8 508.4 363.2 487.5 365.5 473.2 367.9 460.5 372.6 456.5 377.3 458.4 381.9 466.3 386.6 482.5 391.3 507 394.8 531.3 396.9 575 398.8 628.5 399.9 696.5 400.6Z"/>
<path fill="#4d4dbc" fill-rule="evenodd" d="M595.6 395.9 667.4 397 784 397.5 784 363.7 662.5 364.3 584.7 365.5 529 367.9 502.1 371.2 494.5 372.6 483.7 377.3 483.8 381.9 493.5 386.6 511.8 390.2 521.6 391.6 555.6 394.1 594.5 395.9Z"/>
<path fill="#4d4db1" fill-rule="evenodd" d="M608.8 391.3 677.1 392.4 784 393.1 784 369.6 686.8 370.2 618.8 371.2 577.7 372.6 550.7 375.1 535.3 377.3 529.1 381.9 536.1 384.1 545.9 386.7 575 389.3 604.2 391Z"/>
<path fill="none" stroke="#8c1919" stroke-width="1.0" stroke-linejoin="round" d="M298 480 784 480 784 452 477.8 452 473 447.3 400.1 447.3 395.2 442.6 370.9 442.6 366 438 351.5 438 346.6 433.3 341.7 433.3 336.9 428.6 332 428.6 327.2 424 322.3 424 302.9 405.3 302.9 400.6 298 395.9 298 391.3 298 480M759.7 115.7 784 115.7 784 13 643.1 13 647.9 17.7 647.9 41 652.8 45.7 652.8 59.7 657.6 64.4 657.6 69 662.5 73.7 662.5 78.4 681.9 97.1 686.8 97.1 691.7 101.7 701.4 101.7 706.2 106.4 716 106.4 720.8 111.1 754.8 111.1 759.7 115.7"/>
<path fill="none" stroke="#d41919" stroke-width="1.0" stroke-linejoin="round" d="M784 446.7 594.5 446.5 502.1 445.5 438.9 443.8 390.3 439.2 366 434.5 351.5 430.1 336.9 424.2 328.4 419.3 322 414.6 317.4 410.6 312.5 405.3 309 400.6 302.9 390.2 298 378.5M586.5 13 587.9 41 590 64.4 593 83 596.4 97.1 601.6 111.1 606.6 120.4 613.9 129.8 618.7 134.4 623.6 138.3 632.7 143.8 643.3 148.4 658.9 153.1 677.1 156.6 696.5 159.1 720.8 161 750 162.3 784 163.1"/>
<path fill="none" stroke="#ff4519" stroke-width="1.0" stroke-linejoin="round" d="M784 444.3 589.6 444 492.4 442.9 458.4 441.8 429.2 440.1 405.1 438 385.5 435.1 366 431 351.5 426.5 345.2 424 336.9 419.8 327.2 413.3 322.3 409.2 317.4 404.2 312.6 397.8 308.5 391.3 302.9 378.7 298 362.7M546.2 13 547.2 50.4 548.8 78.4 551.2 101.7 554.6 120.4 558.6 134.4 560.4 139.4 564.7 148.4 570.9 157.8 575 162.4 580 167.1 586.4 171.8 594.5 176.4 606 181.1 622.7 185.8 643.1 189.3 667.4 191.9 696.5 193.6 735.4 194.8 784 195.5"/>
<path fill="none" stroke="#ff8c19" stroke-width="1.0" stroke-linejoin="round" d="M784 441.8 579.9 441.3 482.7 439.9 443.8 438.3 419.5 436.4 393.5 433.3 375.8 429.9 356.3 424.3 344.8 419.3 336.6 414.6 330.2 409.9 325.1 405.3 320.8 400.6 314.3 391.3 311.7 386.6 307.6 377.3 302.9 361.8 298 336.4M513.9 13 514.6 59.7 515.9 92.4 518.3 120.4 521.6 141.6 525.7 157.8 531.5 171.8 536.1 179.6 540.9 185.8 545.4 190.5 550.7 194.9 558.4 199.8 565.3 203.3 579.9 208.6 599.3 213 618.8 215.8 643.1 218 677.1 219.6 720.8 220.6 784 221.1"/>
<path fill="none" stroke="#ffe219" stroke-width="1.0" stroke-linejoin="round" d="M784 438.9 570.2 438.5 521.6 437.9 477.8 436.8 443.8 435.1 414.6 432.7 387.4 428.6 366 423.2 355.3 419.3 346.6 415 338.5 409.9 332.7 405.3 328 400.6 324.1 395.9 320.8 391.3 315.7 381.9 311.9 372.6 309 363.2 306.8 353.9 304.1 339.9 300.7 311.9 298 274.9M486.1 13 486.7 69 487.9 106.4 489.8 134.4 492.8 157.8 497.1 176.4 502.3 190.5 507 199.2 510.7 204.5 514.7 209.1 521.6 215.4 526.4 218.9 533.9 223.1 541 226.3 550.7 229.7 560.4 232.4 570.2 234.3 594.5 237.8 623.6 240 662.5 241.5 711.1 242.3 784 242.7"/>
<path fill="none" stroke="#c6ff53" stroke-width="1.0" stroke-linejoin="round" d="M784 435.8 628.5 435.6 541 435 477.8 433.5 438.9 431.3 419.5 429.5 404.9 427.6 385.5 424.1 375.8 421.5 368.5 419.3 356.3 414.3 346.6 408.8 341.6 405.3 336.9 401.1 331.9 395.9 325.4 386.6 320.7 377.3 317.4 368.9 314.5 358.6 311.4 344.6 308.6 325.9 307 311.9 304.1 269.9 302.4 218.5 301.5 143.8 301.1 13M461 13 461.5 78.4 462.5 120.4 464.6 153.1 467.6 176.4 471.7 195.1 474.9 204.5 477.8 211.1 481.9 218.5 485.2 223.1 492.4 231.1 497.3 235.2 502.1 238.5 511.8 243.7 526.4 249 545.9 253.5 560.4 255.7 575 257.3 609 259.5 647.9 260.7 784 261.7"/>
<path fill="none" stroke="#7eff9b" stroke-width="1.0" stroke-linejoin="round" d="M784 432.4 555.6 431.6 497.3 430.5 453.5 428.6 429.2 426.4 409.8 424.1 385.9 419.3 371.1 414.6 361.2 410.3 352.6 405.3 346.3 400.6 341.4 395.9 334 386.6 328.9 377.3 325.1 367.9 322.3 358.6 319.2 344.6 317 330.6 314.8 311.9 312 274.5 309.9 213.8 308.9 139.1 308.5 13M437.1 13 437.4 83 438.3 129.8 439.9 162.4 442.9 190.5 446.7 209.1 449.5 218.5 453.3 227.8 458.4 236.9 462 241.8 466.2 246.5 473 252.4 477.8 255.8 486.5 260.5 502.1 266.3 521.6 270.8 550.7 274.5 584.7 276.7 628.5 278 686.8 278.6 784 278.8"/>
<path fill="none" stroke="#28fff1" stroke-width="1.0" stroke-linejoin="round" d="M784 428.5 638.2 428.2 555.6 427.6 497.3 426.3 451.4 424 414.6 419.8 390.2 414.6 376.3 409.9 366.4 405.3 358.9 400.6 353 395.9 346.6 389.2 341.4 381.9 336.7 372.6 333.3 363.2 330.9 353.9 328.2 339.9 325 311.9 322 269.9 320 209.1 318.9 134.4 318.4 13M412.6 13 412.8 97.1 413.6 143.8 415.1 176.4 417.8 204.5 420.2 218.5 422.5 227.8 425.5 237.2 429.2 245.6 434.1 253.9 438.9 260.2 443.8 265.2 448.7 269.1 457.2 274.5 463.2 277.4 473 281.2 482.1 283.9 492.4 286.2 506.6 288.5 531.3 291.1 565.3 293.1 613.9 294.2 784 294.9"/>
<path fill="none" stroke="#19c6ff" stroke-width="1.0" stroke-linejoin="round" d="M784 423.8 643.1 423.6 560.4 422.9 502.1 421.5 459.3 419.3 438.9 417.2 419.9 414.6 398.9 409.9 385.2 405.3 375.8 400.8 368.2 395.9 362.5 391.3 358.1 386.6 354.6 381.9 351.5 376.8 347.6 367.9 343.8 353.9 341.3 335.2 340.1 311.9 336.8 190.5 335.8 115.7 335.2 13M382.8 13 382.7 106.4 383.3 157.8 384.5 190.5 387 218.5 389.4 232.5 391.6 241.8 394.6 251.2 398.6 260.5 404.3 269.9 407.9 274.5 412.4 279.2 418 283.9 425.1 288.5 434.1 293.1 443.8 296.7 453.5 299.5 463.2 301.7 477.8 304.1 507 307 541 308.8 589.6 309.8 784 310.3"/>
<path fill="none" stroke="#1970ff" stroke-width="1.0" stroke-linejoin="round" d="M784 418.1 623.6 417.7 536.1 416.5 482.7 414.5 458.4 412.4 437.5 409.9 414.3 405.3 400.1 400.7 389.8 395.9 382.5 391.3 375.8 385.3 372.9 381.9 369.7 377.3 365.6 367.9 364.5 363.2 363.5 353.9 364 344.6 366 335.2 368 330.6 370.9 325.3 375.8 320.3 380.6 317.6 385.5 316.3 390.3 315.8 400.1 316.1 434.1 320.2 458.4 322.4 482.7 323.8 511.8 324.8 594.5 325.7 784 325.7"/>
<path fill="none" stroke="#1919ff" stroke-width="1.0" stroke-linejoin="round" d="M784 410.7 652.8 410.4 579.9 409.7 521.6 408 477.8 405.2 445.1 400.6 426.9 395.9 415.3 391.3 407.6 386.6 402.4 381.9 399.1 377.3 397.3 372.6 396.9 367.9 398 363.2 400.8 358.6 404.9 354.9 409.8 352.1 417.2 349.2 424.4 347.5 434.1 346 448.7 344.7 477.8 343.6 531.3 342.9 784 342.1"/>
<path fill="none" stroke="#1919b7" stroke-width="1.0" stroke-linejoin="round" d="M784 398.2 623.6 397.2 570.2 396 545.9 394.6 508.6 391.3 486.5 386.6 477.3 381.9 476.6 377.3 485.3 372.6 497.3 370.1 511.9 367.9 545.9 365.7 584.7 364.3 633.3 363.4 784 362.7"/>
<path stroke="#262626" stroke-opacity="0.045" stroke-width="1" d="M419.5 13V480 M298 363.5H784"/>
<path stroke="#262626" stroke-opacity="0.045" stroke-width="1" d="M540.5 13V480 M298 246.5H784"/>
<path stroke="#262626" stroke-opacity="0.045" stroke-width="1" d="M662.5 13V480 M298 129.5H784"/>
<path stroke="#262626" stroke-opacity="0.5" stroke-width="1" d="M298.5 480V475.3M298 480.5H302.9M419.5 480V475.3M298 363.5H302.9M540.5 480V475.3M298 246.5H302.9M662.5 480V475.3M298 129.5H302.9M784.5 480V475.3M298 12.5H302.9"/>
<path fill="none" stroke="#262626" stroke-opacity="0.3" stroke-width="1" d="M298.5 13V479.5H784"/>
</g>
<path fill="#000" d="M356 172.2h3.4v1.3h-1.1v1.4h-2.3z"/>
</svg>
<div class="tk" style="left:283.0px;width:30px;text-align:center;top:483px">0.5</div>
<div class="tk" style="left:250px;width:45px;text-align:right;top:475.0px">0.5</div>
<div class="tk" style="left:404.5px;width:30px;text-align:center;top:483px">1</div>
<div class="tk" style="left:250px;width:45px;text-align:right;top:358.25px">1</div>
<div class="tk" style="left:526.0px;width:30px;text-align:center;top:483px">1.5</div>
<div class="tk" style="left:250px;width:45px;text-align:right;top:241.5px">1.5</div>
<div class="tk" style="left:647.5px;width:30px;text-align:center;top:483px">2</div>
<div class="tk" style="left:250px;width:45px;text-align:right;top:124.75px">2</div>
<div class="tk" style="left:769.0px;width:30px;text-align:center;top:483px">2.5</div>
<div class="tk" style="left:250px;width:45px;text-align:right;top:8.0px">2.5</div>
<div style="position:absolute;left:441.5px;width:200px;text-align:center;top:493px;font-family:'Liberation Serif',serif;font-size:9px;line-height:11px;color:#333">A-B bond distance (Å)</div>
<div style="position:absolute;left:177px;width:200px;text-align:center;top:241px;font-family:'Liberation Serif',serif;font-size:9px;line-height:11px;color:#333;transform:rotate(-90deg)">B-C bond distance (Å)</div>
</div></body></html>
